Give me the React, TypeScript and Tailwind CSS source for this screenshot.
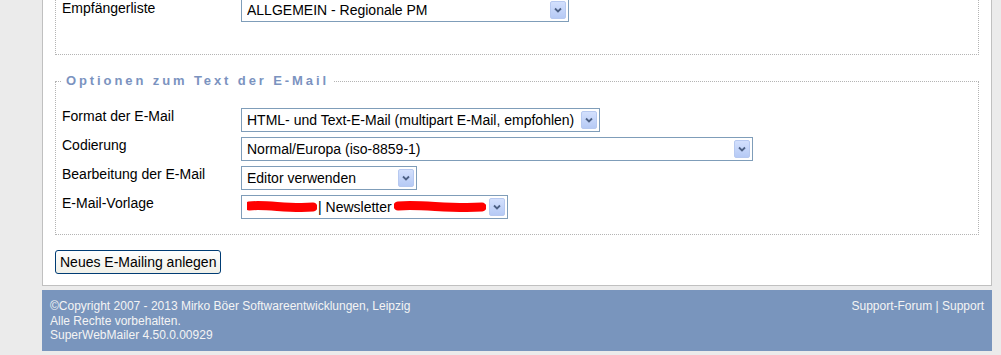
import React from "react";

function Arrow() {
  return (
    <div className="w-[16px] h-[18px] shrink-0 rounded-[2px] border border-[#b7c9f0] bg-gradient-to-b from-[#d3e0fd] to-[#b6caf5] flex items-center justify-center">
      <svg width="8" height="6" viewBox="0 0 8 6">
        <path d="M1 1.5 L4 4.5 L7 1.5" fill="none" stroke="#4d6185" strokeWidth="1.8" />
      </svg>
    </div>
  );
}

function Select({ width, children }: { width: string; children: React.ReactNode }) {
  return (
    <div className={`${width} h-[24px] border border-[#7f9db9] bg-white flex items-center pl-[5px] pr-[2px]`}>
      <div className="flex-1 text-[14px] leading-[16px] text-black whitespace-nowrap overflow-hidden flex items-center">
        {children}
      </div>
      <Arrow />
    </div>
  );
}

function Scribble({ w }: { w: number }) {
  return (
    <svg width={w} height="14" viewBox={`0 0 ${w} 14`} className="shrink-0">
      <path
        d={`M4 6 C ${w * 0.3} 4, ${w * 0.6} 9, ${w - 4} 7`}
        fill="none"
        stroke="#ff0000"
        strokeWidth="9"
        strokeLinecap="round"
      />
    </svg>
  );
}

function Row({ label, children }: { label: string; children: React.ReactNode }) {
  return (
    <div className="flex items-start">
      <div className="w-[179px] text-[14px] leading-[16px] text-black">{label}</div>
      {children}
    </div>
  );
}

export default function App() {
  return (
    <div className="w-[1001px] h-[355px] overflow-hidden bg-[#ebebeb] font-['Liberation_Sans',Arial,sans-serif]">
      <div className="ml-[42px] w-[950px] bg-white border-x border-b border-[#c0c0c0] px-[12px] pb-[11px]">
        {/* Empfängerliste (page is scrolled, the top is cut off) */}
        <div className="h-[55px] border-x border-b border-dotted border-[#b4b4b4] pl-[6px]">
          <div className="flex items-start">
            <div className="w-[179px] text-[14px] leading-[16px] text-black">Empfängerliste</div>
            <div className="-mt-[2px]">
              <Select width="w-[328px]">ALLGEMEIN - Regionale PM</Select>
            </div>
          </div>
        </div>

        <fieldset className="mt-[18px] border border-dotted border-[#b4b4b4] pl-[6px] pt-[19px] pb-[15px]">
          <legend className="px-[4px] text-[13px] leading-[16px] font-bold tracking-[2.9px] text-[#7b93bf]">
            Optionen zum Text der E-Mail
          </legend>
          <div className="flex flex-col gap-[5px]">
            <Row label="Format der E-Mail">
              <Select width="w-[359px]">HTML- und Text-E-Mail (multipart E-Mail, empfohlen)</Select>
            </Row>
            <Row label="Codierung">
              <Select width="w-[512px]">Normal/Europa (iso-8859-1)</Select>
            </Row>
            <Row label="Bearbeitung der E-Mail">
              <Select width="w-[176px]">Editor verwenden</Select>
            </Row>
            <Row label="E-Mail-Vorlage">
              <Select width="w-[267px]">
                <span className="-ml-[2px]">
                  <Scribble w={72} />
                </span>
                <span className="ml-[1px]">| Newsletter</span>
                <span className="ml-[2px]">
                  <Scribble w={92} />
                </span>
              </Select>
            </Row>
          </div>
        </fieldset>

        <button className="mt-[15px] h-[24px] px-[4px] border border-[#003c74] rounded-[3px] bg-gradient-to-b from-[#fefefe] to-[#f0f0e8] text-[14px] leading-[16px] text-black">
          Neues E-Mailing anlegen
        </button>
      </div>

      <div className="mt-[4px] ml-[42px] w-[950px] h-[61px] bg-[#7995bd] px-[8px] pt-[9px] flex justify-between text-[12px] leading-[14.5px] text-[#f4f4f4]">
        <div>
          <div>©Copyright 2007 - 2013 Mirko Böer Softwareentwicklungen, Leipzig</div>
          <div>Alle Rechte vorbehalten.</div>
          <div>SuperWebMailer 4.50.0.00929</div>
        </div>
        <div>Support-Forum | Support</div>
      </div>
    </div>
  );
}
